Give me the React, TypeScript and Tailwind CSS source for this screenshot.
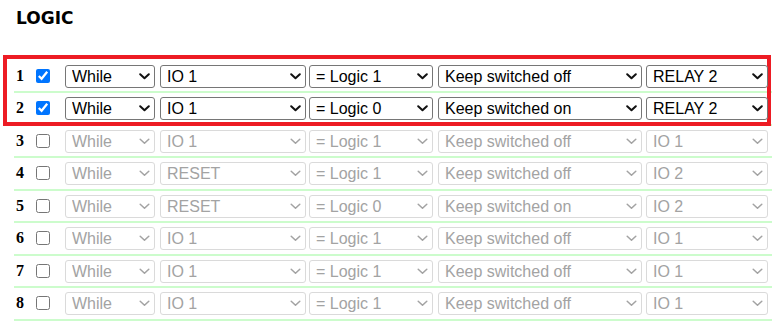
import React from "react";

type Row = {
  n: number;
  on: boolean;
  a: string;
  b: string;
  c: string;
  d: string;
  e: string;
};

const rows: Row[] = [
  { n: 1, on: true, a: "While", b: "IO 1", c: "= Logic 1", d: "Keep switched off", e: "RELAY 2" },
  { n: 2, on: true, a: "While", b: "IO 1", c: "= Logic 0", d: "Keep switched on", e: "RELAY 2" },
  { n: 3, on: false, a: "While", b: "IO 1", c: "= Logic 1", d: "Keep switched off", e: "IO 1" },
  { n: 4, on: false, a: "While", b: "RESET", c: "= Logic 1", d: "Keep switched off", e: "IO 2" },
  { n: 5, on: false, a: "While", b: "RESET", c: "= Logic 0", d: "Keep switched on", e: "IO 2" },
  { n: 6, on: false, a: "While", b: "IO 1", c: "= Logic 1", d: "Keep switched off", e: "IO 1" },
  { n: 7, on: false, a: "While", b: "IO 1", c: "= Logic 1", d: "Keep switched off", e: "IO 1" },
  { n: 8, on: false, a: "While", b: "IO 1", c: "= Logic 1", d: "Keep switched off", e: "IO 1" },
];

const optsA = ["While", "When"];
const optsB = ["IO 1", "IO 2", "RESET"];
const optsC = ["= Logic 1", "= Logic 0"];
const optsD = ["Keep switched off", "Keep switched on", "Switch off", "Switch on"];
const optsE = ["RELAY 1", "RELAY 2", "IO 1", "IO 2"];

const selCls =
  "appearance-none w-full h-[23px] border border-[#767676] rounded-[3px] bg-white text-black pl-[6px] pr-[18px] text-[16px] leading-[21px] disabled:text-[#a3a3a3] disabled:border-[#dadada] [font-family:'Liberation_Sans',Arial,sans-serif]";

function Sel({ value, opts, w, ml, disabled }: { value: string; opts: string[]; w: string; ml: string; disabled: boolean }) {
  return (
    <span className={`relative shrink-0 block ${w} ${ml}`}>
      <select className={selCls} defaultValue={value} disabled={disabled}>
        {opts.map((o) => (
          <option key={o} value={o}>
            {o}
          </option>
        ))}
      </select>
      <svg
        className="pointer-events-none absolute right-[5px] top-[9px]"
        width="11"
        height="7"
        viewBox="0 0 11 7"
        fill="none"
      >
        <path
          d="M1.2 1.2 L5.5 5.3 L9.8 1.2"
          stroke={disabled ? "#a3a3a3" : "#111111"}
          strokeWidth={disabled ? 1.5 : 2}
          strokeLinecap="round"
          strokeLinejoin="round"
        />
      </svg>
    </span>
  );
}

function LogicRow({ r }: { r: Row }) {
  const dis = !r.on;
  return (
    <div className="flex items-center h-[32.5px] w-[758px] border-b-2 border-[#ccfccc]">
      <span className="w-[21.5px] pl-[2px] text-[16px] font-bold text-black [font-family:'Liberation_Serif','Times_New_Roman',serif]">
        {r.n}
      </span>
      <input
        type="checkbox"
        defaultChecked={r.on}
        className="w-[14px] h-[14px] m-0 shrink-0"
      />
      <Sel value={r.a} opts={optsA} w="w-[90px]" ml="ml-[15.5px]" disabled={dis} />
      <Sel value={r.b} opts={optsB} w="w-[146px]" ml="ml-[5px]" disabled={dis} />
      <Sel value={r.c} opts={optsC} w="w-[124px]" ml="ml-[3px]" disabled={dis} />
      <Sel value={r.d} opts={optsD} w="w-[204px]" ml="ml-[5px]" disabled={dis} />
      <Sel value={r.e} opts={optsE} w="w-[122px]" ml="ml-[4px]" disabled={dis} />
    </div>
  );
}

export default function App() {
  return (
    <div className="w-[772px] h-[328px] overflow-hidden bg-white">
      <h2 className="ml-[16px] pt-[8px] text-[17px] leading-[20px] font-bold text-black [font-family:'DejaVu_Sans',Verdana,sans-serif]">
        LOGIC
      </h2>
      <div className="ml-[7px] mt-[31px] w-[760px] h-[63px] mb-[3.5px] outline-4 outline-solid outline-[#ed1c24]">
        <div className="ml-[7px] pt-[1.5px]">
          {rows.slice(0, 2).map((r) => (
            <LogicRow key={r.n} r={r} />
          ))}
        </div>
      </div>
      <div className="ml-[14px]">
        {rows.slice(2).map((r) => (
          <LogicRow key={r.n} r={r} />
        ))}
      </div>
    </div>
  );
}
